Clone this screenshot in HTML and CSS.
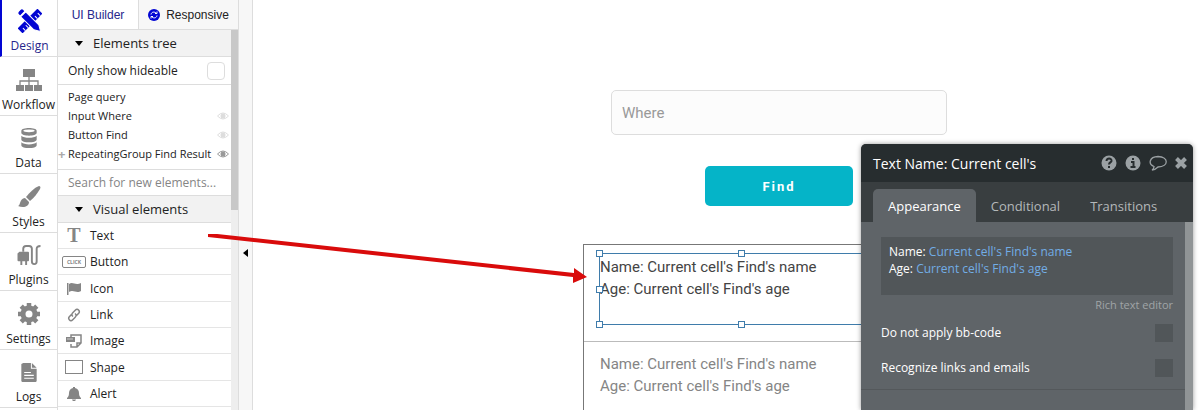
FILE: index.html
```html
<!DOCTYPE html>
<html lang="en">
<head>
    <meta charset="UTF-8">
    <meta name="viewport" content="width=device-width, initial-scale=1.0">
    <title>Design - Editor</title>
    <link rel="stylesheet" href="styles.css">
</head>
<body>
    <div class="editor">
        <nav class="rail">
            <a href="#" class="rail-item active">
                <svg width="24" height="24" viewBox="0 0 24 24" fill="currentColor">
                    <g transform="rotate(45 12 12)">
                        <path d="M8.500 -2h7v28h-7z"/>
                        <path d="M12 1h3.500M12 5h3.500M12 18h3.500M12 22h3.500" stroke="#fff"/>
                    </g>
                    <g transform="rotate(-45 12 12)" stroke="#fff" stroke-width="1">
                        <path d="M8.500 1.500V-1q0-2 3.500-2t3.500 2v2.500zM8.500 2.500h7V21L12 27l-3.500-6z"/>
                    </g>
                </svg>
                <span>Design</span>
            </a>
            <a href="#" class="rail-item">
                <svg width="28" height="24" viewBox="0 0 28 24" fill="currentColor">
                    <path d="M8 1h12v8H8zM1 17h8v6H1zM10 17h8v6h-8zM19 17h8v6h-8z"/>
                    <path d="M14 9v8M5 17v-4h18v4" fill="none" stroke="currentColor" stroke-width="1.3"/>
                </svg>
                <span>Workflow</span>
            </a>
            <a href="#" class="rail-item">
                <svg width="20" height="24" viewBox="0 0 20 24" fill="currentColor">
                    <path d="M2 4c0-4 16-4 16 0v2c0 4-16 4-16 0z"/>
                    <path d="M2 9c3 3 13 3 16 0v4c0 4-16 4-16 0z"/>
                    <path d="M2 16c3 3 13 3 16 0v3c0 4-16 4-16 0z"/>
                    <ellipse cx="10" cy="4" rx="6" ry="1.5" fill="#fff"/>
                </svg>
                <span>Data</span>
            </a>
            <a href="#" class="rail-item">
                <svg width="24" height="24" viewBox="0 0 24 24" fill="currentColor">
                    <path d="M22 1c1 0 2 1 1 3-3 5-6 9-10 12l-4-4C13 7 17 3 22 1z"/>
                    <path d="M8 13l4 4c0 5-6 6-11 4 3-1 1-7 7-8z"/>
                </svg>
                <span>Styles</span>
            </a>
            <a href="#" class="rail-item">
                <svg width="26" height="24" viewBox="0 0 26 24" fill="currentColor">
                    <path d="M3 8h9q1 0 1 1v8q0 1-1 1h-1v4H9v-4H6v4H4v-4H2q-1 0-1-1v-7z"/>
                    <path d="M7 8V5q0-3 3-3h3q3 0 3 3v13c0 4 5 4 5 0V5q0-3 4-3" fill="none" stroke="currentColor" stroke-width="2"/>
                </svg>
                <span>Plugins</span>
            </a>
            <a href="#" class="rail-item">
                <svg width="24" height="24" viewBox="0 0 24 24" stroke="currentColor">
                    <circle cx="12" cy="12" r="6" fill="none" stroke-width="5"/>
                    <path d="M12 1v4M12 19v4M1 12h4M19 12h4M4.200 4.200l3 3M16.800 16.800l3 3M4.200 19.800l3-3M16.800 7.200l3-3" stroke-width="4.500"/>
                </svg>
                <span>Settings</span>
            </a>
            <a href="#" class="rail-item">
                <svg width="18" height="24" viewBox="0 0 18 24" fill="currentColor">
                    <path d="M1 3l2-1h8v6h6v13l-1 1H2l-1-1zM12 2l5 5h-5z"/>
                    <path d="M4 12h7M4 15h10M4 18h10" stroke="#fff" stroke-width="1.300"/>
                </svg>
                <span>Logs</span>
            </a>
        </nav>

        <aside class="sidebar">
            <div class="mode-tabs">
                <button type="button" class="mode-tab active">UI Builder</button>
                <button type="button" class="mode-tab">
                    <svg width="12" height="12" viewBox="0 0 12 12">
                        <circle cx="6" cy="6" r="6" fill="#0205d3"/>
                        <path d="M3 5.500c.5-3 4-3 5.500-1M9 6.500c-.5 3-4 3-5.500 1M9 2.500v2H7M3 9.500v-2h2" fill="none" stroke="#fff"/>
                    </svg>
                    Responsive
                </button>
            </div>
            <div class="sidebar-body">
                <div class="sidebar-list">
                    <button type="button" class="section-title"><span class="caret"></span>Elements tree</button>
                    <label class="hideable">Only show hideable <input type="checkbox"></label>
                    <ul class="tree">
                        <li>Page query</li>
                        <li>Input Where
                            <svg class="eye" width="12" height="8" viewBox="0 0 12 8"><path d="M.5 4Q6-2 11.500 4 6 10 .5 4z" fill="none" stroke="currentColor"/><circle cx="6" cy="4" r="2.500" fill="currentColor"/></svg>
                        </li>
                        <li>Button Find
                            <svg class="eye" width="12" height="8" viewBox="0 0 12 8"><path d="M.5 4Q6-2 11.500 4 6 10 .5 4z" fill="none" stroke="currentColor"/><circle cx="6" cy="4" r="2.500" fill="currentColor"/></svg>
                        </li>
                        <li class="expandable">RepeatingGroup Find Result
                            <svg class="eye shown" width="12" height="8" viewBox="0 0 12 8"><path d="M.5 4Q6-2 11.500 4 6 10 .5 4z" fill="none" stroke="currentColor"/><circle cx="6" cy="4" r="2.500" fill="currentColor"/></svg>
                        </li>
                    </ul>
                    <input type="text" class="search" placeholder="Search for new elements..." aria-label="Search for new elements">
                    <button type="button" class="section-title"><span class="caret"></span>Visual elements</button>
                    <ul class="elements">
                        <li><span class="icon letter">T</span>Text</li>
                        <li><span class="icon"><span class="click">CLICK</span></span>Button</li>
                        <li>
                            <span class="icon"><svg width="14" height="13" viewBox="0 0 14 13" fill="currentColor"><path d="M0 1h1.500v12H0zM2 2c4-3 6 2 12-1v8c-5 3-7-2-12 1z"/></svg></span>Icon
                        </li>
                        <li>
                            <span class="icon"><svg width="14" height="14" viewBox="0 0 14 14" fill="none" stroke="currentColor" stroke-width="1.500"><path d="M6 8.500C4 7 5 5.500 6 4.500L8.500 2c2-2 5 1 3.200 3.200L9.500 7.500M8 5.500c2 1.500 1 3 0 4L5.500 12c-2 2-5-1-3.200-3.200L4.500 6.500"/></svg></span>Link
                        </li>
                        <li>
                            <span class="icon"><svg width="16" height="14" viewBox="0 0 16 14" fill="none" stroke="currentColor" stroke-width="1.500"><path d="M5 3V1h10v8l-4 4H5v-3M11 13V9h4"/><path d="M0 3h9v5H0z" fill="currentColor" stroke="none"/><path d="M1 5h6" stroke="#ccc" stroke-width="1"/></svg></span>Image
                        </li>
                        <li><span class="icon"><span class="shape"></span></span>Shape</li>
                        <li>
                            <span class="icon"><svg width="14" height="14" viewBox="0 0 14 14" fill="currentColor"><path d="M6 0h2v1c3 .5 4 3 4 5 0 3 1 4 2 5v1H0v-1c1-1 2-2 2-5 0-2 1-4.500 4-5zM5 12.500h4c-.5 2-3.500 2-4 0z"/></svg></span>Alert
                        </li>
                    </ul>
                </div>
                <div class="scrollbar"><div class="thumb"></div></div>
            </div>
        </aside>

        <button type="button" class="collapse" aria-label="Collapse sidebar"><span></span></button>

        <main class="canvas">
            <div class="page">
                <input type="text" class="where" placeholder="Where" aria-label="Where">
                <button type="button" class="find">Find</button>
                <div class="repeating-group">
                    <div class="cell">
                        <div class="cell-text">
                            Name: Current cell's Find's name<br>Age: Current cell's Find's age
                            <span class="handle top left"></span>
                            <span class="handle top center"></span>
                            <span class="handle middle left"></span>
                            <span class="handle bottom left"></span>
                            <span class="handle bottom center"></span>
                        </div>
                    </div>
                    <div class="cell preview">
                        <div class="cell-text">Name: Current cell's Find's name<br>Age: Current cell's Find's age</div>
                    </div>
                </div>
            </div>
        </main>

        <svg class="drag-arrow" width="380" height="56" viewBox="0 0 380 56">
            <path d="M0 -1l366 40 0-5 13 9-14 6 0-6L0 3z" fill="#d90b0b"/>
        </svg>

        <section class="panel">
            <header class="panel-header">
                <h2>Text Name: Current cell's</h2>
                <button type="button" aria-label="Help">
                    <svg width="16" height="16" viewBox="0 0 16 16"><circle cx="8" cy="8" r="7.500" fill="currentColor"/><path d="M5.500 6c0-3.500 5.500-3 5 0-.3 1.500-2.500 1.500-2.500 3.500M8 11v2" fill="none" stroke="#272d2f" stroke-width="2"/></svg>
                </button>
                <button type="button" aria-label="Info">
                    <svg width="16" height="16" viewBox="0 0 16 16"><circle cx="8" cy="8" r="7.500" fill="currentColor"/><path d="M8 3v2M6 7h2.500v5M5.500 12h5" fill="none" stroke="#272d2f" stroke-width="2"/></svg>
                </button>
                <button type="button" aria-label="Comment">
                    <svg width="18" height="16" viewBox="0 0 18 16" fill="none" stroke="currentColor" stroke-width="1.300"><path d="M5 11.500C-1 9 0 2 9 1.500c11 .5 11 10 0 10.500-1 1-3 3-6 3 2-1 2-2 2-3.500z"/></svg>
                </button>
                <button type="button" aria-label="Close">
                    <svg width="12" height="12" viewBox="0 0 12 12" stroke="currentColor" stroke-width="4"><path d="M1.500 1.500l9 9M10.500 1.500l-9 9"/></svg>
                </button>
            </header>
            <div class="panel-tabs">
                <button type="button" class="panel-tab active">Appearance</button>
                <button type="button" class="panel-tab">Conditional</button>
                <button type="button" class="panel-tab">Transitions</button>
            </div>
            <div class="panel-body">
                <div class="panel-form">
                    <div class="fields">
                        <div class="composer">Name: <span>Current cell's Find's name</span><br>Age: <span>Current cell's Find's age</span></div>
                        <a href="#" class="rich">Rich text editor</a>
                        <label class="check">Do not apply bb-code <input type="checkbox"></label>
                        <label class="check">Recognize links and emails <input type="checkbox"></label>
                    </div>
                </div>
                <div class="panel-scroll"></div>
            </div>
        </section>
    </div>
</body>
</html>
```

FILE: styles.css
```css
* {
    box-sizing: border-box;
}
body {
    margin: 0;
    font-family: "Open Sans", sans-serif;
    font-size: 12px;
    color: #222;
    background: #fff;
}
button {
    margin: 0;
    padding: 0;
    border: none;
    background: none;
    color: inherit;
    font: inherit;
    cursor: pointer;
}
ul {
    margin: 0;
    padding: 0;
    list-style: none;
}
.editor {
    position: relative;
    display: flex;
    height: 100vh;
    overflow: hidden;
}

/* left navigation */
.rail {
    flex: 0 0 58px;
    border-right: 1px solid #ddd;
}
.rail-item {
    display: flex;
    flex-direction: column;
    align-items: center;
    gap: 3px;
    height: 58px;
    padding-top: 11px;
    border-bottom: 1px solid #ddd;
    color: #858585;
    text-decoration: none;
}
.rail-item:nth-child(even) {
    height: 59px;
}
.rail-item span {
    font-size: 12px;
    line-height: 20px;
    color: #222;
}
.rail-item.active {
    height: 57px;
    padding-top: 9px;
    border-left: 2px solid #0205d3;
    color: #0205d3;
}
.rail-item.active span {
    color: #26268c;
}

/* elements sidebar */
.sidebar {
    flex: 0 0 181px;
    display: flex;
    flex-direction: column;
    border-right: 1px solid #ddd;
}
.mode-tabs {
    display: flex;
    height: 30px;
    border-bottom: 1px solid #ddd;
    font-family: "Liberation Sans", Arial, sans-serif;
}
.mode-tab {
    flex: 1;
    display: flex;
    align-items: center;
    justify-content: center;
    gap: 6px;
    background: #f7f7f7;
}
.mode-tab.active {
    flex: 0 0 81px;
    border-right: 1px solid #ddd;
    background: #fff;
    color: #26268c;
}
.sidebar-body {
    flex: 1;
    display: flex;
    min-height: 0;
}
.sidebar-list {
    flex: 1;
}
.scrollbar {
    width: 7px;
    background: #eee;
}
.thumb {
    height: 180px;
    background: #c8c8c8;
}
.section-title {
    display: flex;
    align-items: center;
    gap: 10px;
    width: 100%;
    height: 27px;
    padding-left: 17px;
    border-bottom: 1px solid #ddd;
    background: #f2f2f2;
    font-size: 13px;
}
.caret {
    border: 4px solid transparent;
    border-top: 5px solid #000;
    border-bottom: none;
}
.hideable {
    display: flex;
    align-items: center;
    justify-content: space-between;
    height: 28px;
    padding: 0 6px 0 10px;
    border-bottom: 1px solid #ddd;
}
.hideable input {
    appearance: none;
    width: 18px;
    height: 18px;
    margin: 0;
    border: 1px solid #ddd;
    border-radius: 4px;
}
.tree {
    height: 85px;
    padding: 2px 0;
    border-bottom: 1px solid #ddd;
    font-size: 11px;
}
.tree li {
    position: relative;
    display: flex;
    align-items: center;
    justify-content: space-between;
    height: 19px;
    padding: 0 2px 0 10px;
    white-space: nowrap;
}
.expandable::before {
    content: "+";
    position: absolute;
    left: 0;
    font-size: 13px;
    font-weight: bold;
    color: #aaa;
}
.eye {
    color: #ddd;
}
.eye.shown {
    color: #999;
}
.search {
    display: block;
    width: 100%;
    height: 26px;
    padding: 0 10px;
    border: none;
    border-bottom: 1px solid #ddd;
    font: inherit;
}
.search::placeholder {
    color: #858585;
}
.elements li {
    display: flex;
    align-items: center;
    height: 26px;
    border-bottom: 1px solid #e5e5e5;
}
.elements li:nth-child(3n) {
    height: 27px;
}
.icon {
    flex: 0 0 32px;
    display: flex;
    align-items: center;
    justify-content: center;
    color: #858585;
}
.letter {
    font: bold 20px "Liberation Serif", serif;
}
.click {
    width: 24px;
    border: 1px solid #858585;
    border-radius: 2px;
    font: bold 5px/10px "Open Sans", sans-serif;
    text-align: center;
}
.shape {
    width: 18px;
    height: 14px;
    border: 1px solid #858585;
}
.collapse {
    flex: 0 0 14px;
    display: flex;
    align-items: center;
    justify-content: center;
    padding-top: 96px;
    border-right: 1px solid #ddd;
    background: #f7f7f7;
}
.collapse span {
    border: 4px solid transparent;
    border-right: 5px solid #000;
    border-left: none;
}

/* page canvas */
.canvas {
    flex: 1;
    min-width: 0;
    padding: 90px 0 0 330px;
    font-family: Roboto, sans-serif;
}
.page {
    display: flex;
    flex-direction: column;
    align-items: center;
    width: 392px;
}
.where {
    width: 336px;
    height: 45px;
    padding: 0 10px;
    border: 1px solid #ddd;
    border-radius: 5px;
    background: #fcfcfc;
    font: 15px Roboto, sans-serif;
}
.where::placeholder {
    color: #999;
}
.find {
    width: 148px;
    height: 40px;
    margin: 31px 0 38px;
    border-radius: 5px;
    background: #05b4c8;
    color: #fff;
    font-size: 13px;
    font-weight: bold;
    letter-spacing: 2px;
}
.repeating-group {
    width: 100%;
    border: 1px solid #777;
}
.cell {
    height: 97px;
    padding: 8px 15px;
    border-bottom: 1px solid #bbb;
    font-size: 15px;
    line-height: 22px;
    color: #444;
}
.cell-text {
    position: relative;
    width: 286px;
    height: 72px;
    padding-top: 2px;
    border: 1px solid #3f7cab;
}
.preview .cell-text {
    border-color: transparent;
    color: #858585;
}
.handle {
    position: absolute;
    width: 7px;
    height: 7px;
    border: 1px solid #3f7cab;
    background: #fff;
}
.top {
    top: -4px;
}
.middle {
    top: 32px;
}
.bottom {
    bottom: -4px;
}
.left {
    left: -4px;
}
.center {
    left: 138px;
}
.drag-arrow {
    position: absolute;
    top: 234px;
    left: 208px;
}

/* property editor */
.panel {
    position: absolute;
    top: 144px;
    right: 7px;
    bottom: 0;
    display: flex;
    flex-direction: column;
    width: 332px;
    border-radius: 5px 5px 0 0;
    background: #5f6468;
    box-shadow: 0 0 5px rgba(0,0,0,0.4);
    color: #fff;
    overflow: hidden;
}
.panel-header {
    display: flex;
    align-items: center;
    gap: 8px;
    height: 38px;
    padding: 0 6px 0 12px;
    background: #272d2f;
    color: #9ba1a4;
}
.panel-header h2 {
    flex: 1;
    margin: 0;
    font-size: 14px;
    font-weight: normal;
    color: #fff;
}
.panel-header svg {
    display: block;
}
.panel-tabs {
    display: flex;
    align-items: flex-end;
    height: 40px;
    padding-left: 12px;
    background: #393e40;
}
.panel-tab {
    height: 33px;
    padding: 0 15px;
    font-size: 13px;
    color: #b4b8ba;
}
.panel-tab.active {
    border-radius: 5px 5px 0 0;
    background: #5f6468;
    color: #fff;
}
.panel-body {
    flex: 1;
    display: flex;
}
.panel-form {
    flex: 1;
}
.fields {
    display: flex;
    flex-direction: column;
    height: 168px;
    padding: 15px 12px 0 20px;
    border-bottom: 1px solid #54585b;
}
.composer {
    height: 58px;
    padding: 6px 8px;
    background: #515659;
    line-height: 17px;
}
.composer span {
    color: #72ade6;
}
.rich {
    align-self: flex-end;
    font-size: 11px;
    line-height: 20px;
    color: #a0a4a7;
    text-decoration: none;
}
.check {
    display: flex;
    align-items: center;
    justify-content: space-between;
    height: 35px;
}
.check input {
    appearance: none;
    width: 18px;
    height: 18px;
    margin: 0;
    background: #515659;
}
.panel-scroll {
    width: 8px;
    background: #909496;
}
```
